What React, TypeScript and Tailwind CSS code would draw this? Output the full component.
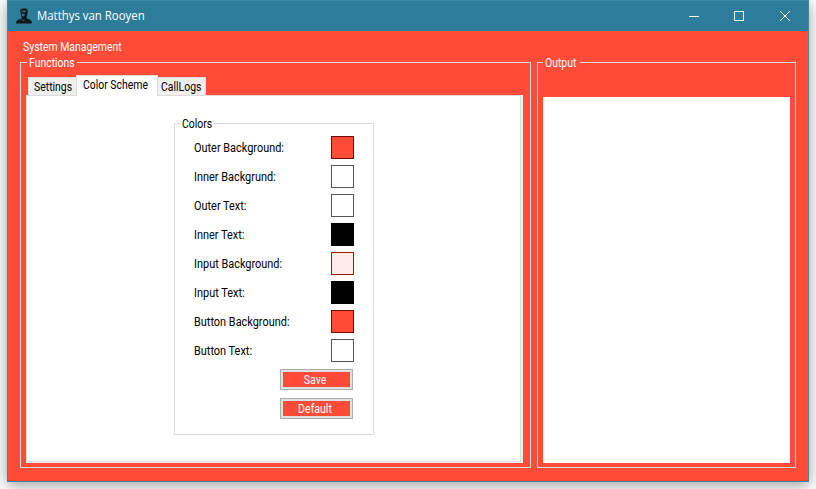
const rows = [
  { label: 'Outer Background:', swatch: 'bg-[#ff4b37] border-[#6b0d02]' },
  { label: 'Inner Backgrund:', swatch: 'bg-white border-[#555555]' },
  { label: 'Outer Text:', swatch: 'bg-white border-[#555555]' },
  { label: 'Inner Text:', swatch: 'bg-black border-black' },
  { label: 'Input Background:', swatch: 'bg-[#ffebe9] border-[#a31505]' },
  { label: 'Input Text:', swatch: 'bg-black border-black' },
  { label: 'Button Background:', swatch: 'bg-[#ff4b37] border-[#6b0d02]' },
  { label: 'Button Text:', swatch: 'bg-white border-[#555555]' },
];

// Interface text in a slightly condensed cut.
function Narrow({ children }: { children: string }) {
  return <span className="block origin-left scale-x-[0.87] whitespace-nowrap">{children}</span>;
}

function TitleBar() {
  return (
    <header className="flex h-[30px] items-center bg-[#2d7d9a] pl-2 text-white">
      <svg width="16" height="16" viewBox="0 0 16 16" className="shrink-0">
        <path d="M4.2 2.2 5.5.7 9.5.3 11.5 1.5 11.8 4 11.2 6.5 10.5 9 11 10.5 13.5 11.5 15.7 13.2V15.5H.2v-2L2 11.8 5 10.8 5.8 9.5 5 7 4.6 4.5Z" fill="#101719" />
        <path d="M5 3.6 6 2.8 9.8 2.7 10.2 3.7 8.6 4 8.2 5 7.4 4.1ZM5.3 5.6 7 5.8l1.6.5.5.9-1.5.2.5 1-1.8-.3ZM5.2 10.8l1.6 1.5 1.5-.7.5.3-1.6 1.2-2.4-1.5Z" fill="#2d7d9a" />
      </svg>
      <h1 className="ml-[5px] w-[200px] origin-left scale-x-95 whitespace-nowrap font-['Open_Sans',sans-serif] text-[12px] leading-4">Matthys van Rooyen</h1>
      <div className="ml-auto flex text-white">
        {['M19 15.5h10', 'M18.5 10.5h9v9h-9Z', 'M18 10l10 10M28 10 18 20'].map((d) => (
          <svg key={d} width="46" height="30" viewBox="0 0 46 30" fill="none" stroke="currentColor" strokeWidth="1">
            <path d={d} />
          </svg>
        ))}
      </div>
    </header>
  );
}

function ColorsGroup() {
  return (
    <fieldset className="ml-[147px] mt-[21px] h-[318px] w-[200px] border border-[#dcdcdc]">
      <legend className="ml-[5px] h-[13px] w-[34px] pl-[2px] pt-px leading-[13px]"><Narrow>Colors</Narrow></legend>
      <div className="mt-[6px] flex flex-col gap-[6px] pl-[19px] pr-[19px]">
        {rows.map((r) => (
          <div key={r.label} className="flex h-[23px] items-center justify-between">
            <span className="origin-left scale-x-[0.91] whitespace-nowrap pt-[2px]">{r.label}</span>
            <span className={`size-[23px] border ${r.swatch}`} />
          </div>
        ))}
      </div>
      <div className="mt-[7px] flex flex-col items-end gap-2 pr-[20px]">
        {['Save', 'Default'].map((label) => (
          <button key={label} className="h-[21px] w-[73px] border border-[#adadad] bg-[#e1e1e1] p-[2px] text-white">
            <span className="block h-[15px] bg-[#ff4b37] pr-[3px] pt-px leading-[15px]">
              <span className="block scale-x-[0.88]">{label}</span>
            </span>
          </button>
        ))}
      </div>
    </fieldset>
  );
}

export default function App() {
  return (
    <div className="h-[489px] w-[816px] overflow-hidden bg-white pl-[7px] font-[Roboto,sans-serif] text-[12px] leading-[13px] text-black">
      <main className="h-[482px] w-[802px] border border-[#3f87a1] shadow-[0_3px_14px_rgba(0,0,0,0.4)]">
        <TitleBar />
        <div className="h-[450px] bg-[#ff4b37]">
          <nav className="h-[25px] w-[150px] pl-[15px] pt-[10px] text-white"><Narrow>System Management</Narrow></nav>
          <div className="flex gap-[6px] pl-3">
            <fieldset className="h-[412px] w-[511px] border border-[#dcdcdc]">
              <legend className="ml-[6px] h-[13px] w-[50px] pl-[2px] pt-px leading-[13px] text-white"><Narrow>Functions</Narrow></legend>
              <div className="ml-[7px] mt-[6px] flex h-5 items-end">
                <div className="h-[18px] w-[48px] border-l border-t border-[#dcdcdc] bg-[#f0f0f0] pl-[5px] pt-[3px]"><Narrow>Settings</Narrow></div>
                <div className="z-10 -mb-px h-[21px] w-[82px] border-x border-t border-[#dcdcdc] bg-white pl-[6px] pt-[3px]"><Narrow>Color Scheme</Narrow></div>
                <div className="h-[18px] w-[48px] border-r border-t border-[#dcdcdc] bg-[#f0f0f0] pl-[3px] pt-[3px]"><Narrow>CallLogs</Narrow></div>
              </div>
              <div className="ml-[5px] h-[368px] w-[497px] bg-[#f0f0f0] pb-px pr-[2px]">
                <div className="flex h-[367px] w-[495px] items-start border border-[#dcdcdc] bg-white">
                  <ColorsGroup />
                </div>
              </div>
            </fieldset>
            <fieldset className="h-[412px] w-[259px] border border-[#dcdcdc]">
              <legend className="ml-[5px] h-[13px] w-[37px] pl-[2px] pt-px leading-[13px] text-white"><Narrow>Output</Narrow></legend>
              <div className="ml-[5px] mt-[28px] h-[366px] w-[247px] bg-white" />
            </fieldset>
          </div>
        </div>
      </main>
    </div>
  );
}
